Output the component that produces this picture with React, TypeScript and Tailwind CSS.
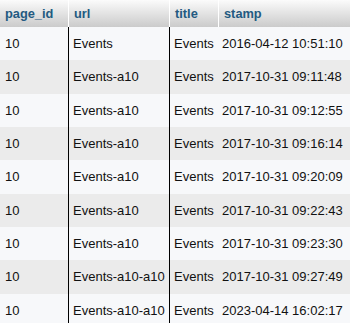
const rows = [
  ["10", "Events", "Events", "2016-04-12 10:51:10"],
  ["10", "Events-a10", "Events", "2017-10-31 09:11:48"],
  ["10", "Events-a10", "Events", "2017-10-31 09:12:55"],
  ["10", "Events-a10", "Events", "2017-10-31 09:16:14"],
  ["10", "Events-a10", "Events", "2017-10-31 09:20:09"],
  ["10", "Events-a10", "Events", "2017-10-31 09:22:43"],
  ["10", "Events-a10", "Events", "2017-10-31 09:23:30"],
  ["10", "Events-a10-a10", "Events", "2017-10-31 09:27:49"],
  ["10", "Events-a10-a10", "Events", "2023-04-14 16:02:17"],
];

export default function App() {
  return (
    <div
      className="w-[350px] h-[323px] overflow-hidden bg-[#f7f8fa] text-[13px] text-[#111]"
      style={{ fontFamily: '"Liberation Sans", Arial, sans-serif' }}
    >
      {/* Header */}
      <div className="flex h-[27px] bg-gradient-to-b from-[#fbfbfb] to-[#cbcbcb] font-bold text-[#235a81] text-[12.8px]">
        <div className="w-[68px] pl-[5px] flex items-center">page_id</div>
        <div className="w-[101px] pl-[5px] flex items-center border-l border-white">url</div>
        <div className="w-[49px] pl-[5px] flex items-center border-l border-white">title</div>
        <div className="flex-1 pl-[5px] flex items-center border-l border-white">stamp</div>
      </div>

      {/* Rows */}
      {rows.map((r, i) => (
        <div
          key={i}
          className={`flex h-[33.33px] ${i % 2 === 0 ? "bg-[#f7f8fa]" : "bg-[#ebebeb]"}`}
        >
          <div className="w-[68px] pl-[5px] flex items-center">{r[0]}</div>
          <div className="w-[101px] pl-[4px] flex items-center border-l border-black whitespace-nowrap">{r[1]}</div>
          <div className="w-[49px] pl-[4px] flex items-center border-l border-black">{r[2]}</div>
          <div className="flex-1 pl-[4px] flex items-center whitespace-nowrap">{r[3]}</div>
        </div>
      ))}
    </div>
  );
}
